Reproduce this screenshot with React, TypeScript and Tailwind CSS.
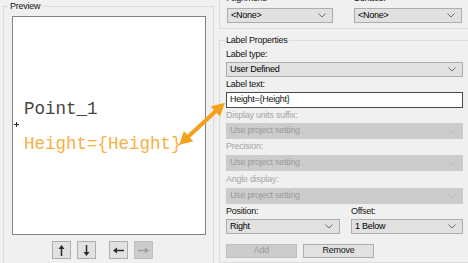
import React from "react";

function Chevron({ dim }: { dim?: boolean }) {
  return (
    <svg width="8" height="5" viewBox="0 0 8 5" className="shrink-0">
      <path d="M0.5 0.5L4 4L7.5 0.5" fill="none" stroke={dim ? "#bdbdbd" : "#6d6d6d"} strokeWidth="1" />
    </svg>
  );
}

function Combo({ value, disabled, className = "" }: { value: string; disabled?: boolean; className?: string }) {
  return (
    <div
      className={`flex items-center justify-between border pl-[3px] pr-[6px] ${
        disabled ? "bg-[#cccccc] border-[#cccccc] text-[#9a9a9a]" : "bg-[#e1e1e1] border-[#adadad] text-black"
      } ${className}`}
    >
      <span>{value}</span>
      <Chevron dim={disabled} />
    </div>
  );
}

function ArrowIcon({ dir, dim }: { dir: "up" | "down" | "left" | "right"; dim?: boolean }) {
  const c = dim ? "#9d9d9d" : "#2b2b2b";
  if (dir === "up" || dir === "down") {
    return (
      <svg width="7" height="11" viewBox="0 0 7 11" className={dir === "down" ? "rotate-180" : ""}>
        <path d="M3.5 0L6.5 4H0.5Z" fill={c} />
        <rect x="2.75" y="3" width="1.5" height="8" fill={c} />
      </svg>
    );
  }
  return (
    <svg width="11" height="7" viewBox="0 0 11 7" className={dir === "right" ? "rotate-180" : ""}>
      <path d="M0 3.5L4 0.5V6.5Z" fill={c} />
      <rect x="3" y="2.75" width="8" height="1.5" fill={c} />
    </svg>
  );
}

function NavButton({ dir, dim, className = "" }: { dir: "up" | "down" | "left" | "right"; dim?: boolean; className?: string }) {
  return (
    <div
      className={`w-[19px] h-[18px] flex items-center justify-center border ${
        dim ? "bg-[#cccccc] border-[#bfbfbf]" : "bg-[#e1e1e1] border-[#adadad]"
      } ${className}`}
    >
      <ArrowIcon dir={dir} dim={dim} />
    </div>
  );
}

export default function App() {
  return (
    <div className="relative w-[468px] h-[263px] overflow-hidden bg-[#f0f0f0] flex font-['Liberation_Sans',Arial,sans-serif] text-[9px] tracking-[-0.25px] text-[#111]">
      {/* preview */}
      <div className="w-[214px] shrink-0 pl-[3px]">
        <fieldset className="w-[211px] h-[300px] border border-[#dcdcdc]">
          <legend className="ml-[4px] px-[2px] h-[13px] leading-[13px]">Preview</legend>
          <div className="relative ml-[8px] mt-[3px] w-[194px] h-[219px] border border-[#828282] bg-white pt-[75px] pl-[11px] font-['Liberation_Mono',monospace] text-[17.5px] leading-[35px] tracking-normal">
            <div className="text-[#444]">Point_1</div>
            <div className="text-[#f7b043]">Height={"{"}Height{"}"}</div>
            <svg width="5" height="5" viewBox="0 0 5 5" className="absolute left-[1px] top-[105px]">
              <path d="M2.5 0V5M0 2.5H5" stroke="#222" strokeWidth="1" />
            </svg>
          </div>
          <div className="flex mt-[6px] pl-[48px]">
            <NavButton dir="up" />
            <NavButton dir="down" className="ml-[6px]" />
            <NavButton dir="left" className="ml-[13px]" />
            <NavButton dir="right" dim className="ml-[6px]" />
          </div>
        </fieldset>
      </div>

      {/* properties */}
      <div className="ml-[5px] w-[251px] shrink-0 flex flex-col">
        <div className="-mt-[10px] border-x border-b border-[#dcdcdc] px-[7px] pb-[5px] flex gap-[21px]">
          <div className="w-[106px]">
            <div className="h-[18px] flex items-center">Alignment:</div>
            <Combo value="<None>" className="h-[15px]" />
          </div>
          <div className="w-[108px]">
            <div className="h-[18px] flex items-center">Surface:</div>
            <Combo value="<None>" className="h-[15px]" />
          </div>
        </div>

        <fieldset className="mt-[5px] h-[300px] border border-[#dcdcdc] px-[6px]">
          <legend className="-ml-[1px] px-[1px] h-[13px] leading-[13px]">Label Properties</legend>
          <div className="h-[15px] flex items-center">Label type:</div>
          <Combo value="User Defined" className="h-[15px]" />
          <div className="h-[15px] flex items-center">Label text:</div>
          <div className="h-[16px] flex items-center border border-[#4a4a4a] bg-white pl-[3px]">Height={"{"}Height{"}"}</div>
          <div className="h-[15px] flex items-center text-[#a6a6a6]">Display units suffix:</div>
          <Combo value="Use project setting" disabled className="h-[16px]" />
          <div className="h-[16px] flex items-center text-[#a6a6a6]">Precision:</div>
          <Combo value="Use project setting" disabled className="h-[16px]" />
          <div className="h-[17px] flex items-center text-[#a6a6a6]">Angle display:</div>
          <Combo value="Use project setting" disabled className="h-[16px]" />
          <div className="grid grid-cols-[114px_112px] gap-x-[11px]">
            <div className="h-[15px] flex items-center">Position:</div>
            <div className="h-[15px] flex items-center">Offset:</div>
            <Combo value="Right" className="h-[15px]" />
            <Combo value="1 Below" className="h-[15px]" />
          </div>
          <div className="flex gap-[6px] mt-[10px]">
            <div className="w-[71px] h-[14px] flex items-center justify-center bg-[#cccccc] border border-[#bfbfbf] text-[#9a9a9a]">Add</div>
            <div className="w-[71px] h-[14px] flex items-center justify-center bg-[#e1e1e1] border border-[#adadad]">Remove</div>
          </div>
        </fieldset>
      </div>

      {/* callout arrow */}
      <svg className="absolute inset-0 pointer-events-none" width="468" height="263" viewBox="0 0 468 263">
        <polygon
          points="179,145 183.9,131 187.2,134.7 214,110 210.7,106.4 225,102.7 220.1,116.6 216.8,113 190,137.7 193.3,141.3"
          fill="#f4a11d"
        />
      </svg>
    </div>
  );
}
